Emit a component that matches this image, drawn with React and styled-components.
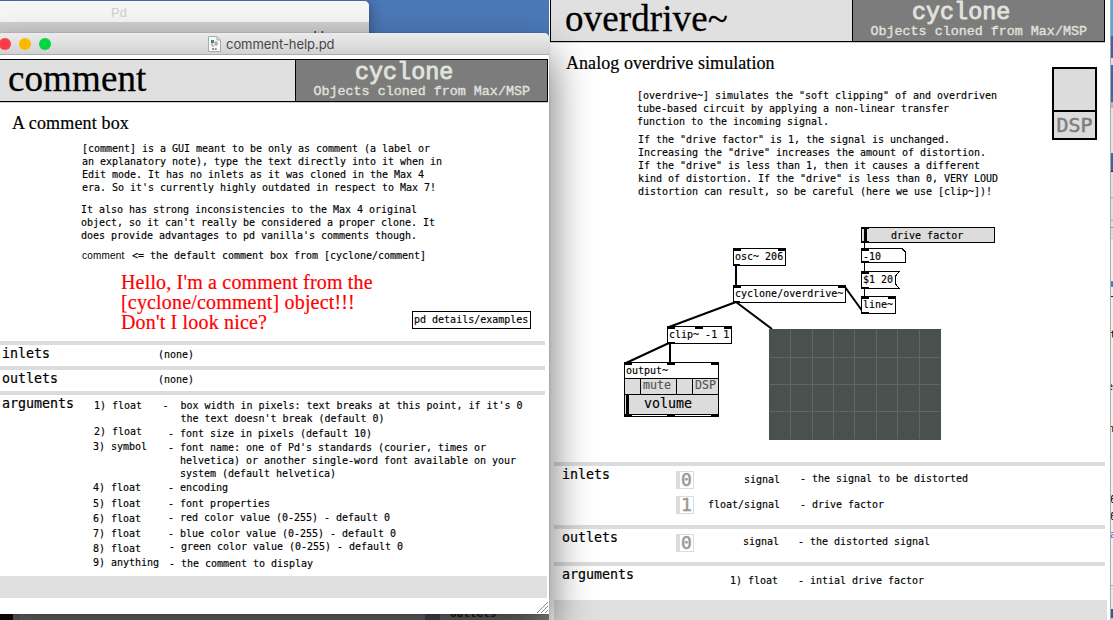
import React from "react";
import styled, { createGlobalStyle } from "styled-components";

const mono = `"DejaVu Sans Mono", "Liberation Mono", monospace`;
const serif = `"Liberation Serif", "Times New Roman", serif`;
const sans = `"Liberation Sans", Arial, sans-serif`;

const GlobalStyle = createGlobalStyle`
  *, *::before, *::after { box-sizing: border-box; }
  body { margin: 0; overflow: hidden; }
`;

const Desktop = styled.div`
  position: relative;
  width: 1113px;
  height: 620px;
  overflow: hidden;
  background: #4b78b8;
  font: 10px/13px ${mono};
  color: #000;
`;

const Frame = styled.div`
  position: absolute;
  left: ${(p) => p.$x}px;
  top: ${(p) => p.$y}px;
  width: ${(p) => p.$w}px;
  height: ${(p) => p.$h}px;
  display: flex;
  flex-direction: column;
  overflow: hidden;
  background: ${(p) => p.$bg || "#fff"};
  border-radius: ${(p) => p.$r || "0"};
  box-shadow: ${(p) => p.$shadow || "none"};
`;

const ConsoleBar = styled.div`
  height: 21px;
  padding: 4px 0 0 118px;
  background: #f6f6f6;
  color: #cfcfcf;
  font: 13px/16px ${sans};
`;
const ConsoleBody = styled.div`
  flex: 1;
  padding: 8px 0 0 203px;
  background: linear-gradient(#d0d0d0, #bdbdbd);
  font-size: 12px;
  line-height: 12px;
  white-space: pre;
`;

const TitleBar = styled.div`
  flex: none;
  height: 22px;
  display: flex;
  align-items: center;
  padding-left: 6px;
  background: linear-gradient(#ececec, #d2d2d2);
  border-bottom: 1px solid #acacac;
`;
const Light = styled.i`
  width: 12px;
  height: 12px;
  margin-right: 8px;
  border-radius: 50%;
  background: ${(p) => p.$c};
`;
const Title = styled.span`
  margin-left: 5px;
  font: 13px/16px Inter, ${sans};
  letter-spacing: -0.05px;
  color: #474747;
`;
const DocIcon = styled.svg`
  width: 13px;
  height: 16px;
  margin-left: 149px;
`;

const Banner = styled.header`
  flex: none;
  display: flex;
  width: 555px;
  height: 43px;
  margin: ${(p) => p.$m || "0"};
  border: 1px solid #000;
  background: #e0e0e0;
  box-shadow: 0 1px 0 #ccc;
`;
const Name = styled.h1`
  width: 301px;
  margin: 0;
  padding-left: 14px;
  font: 37px/38px ${serif};
  letter-spacing: 0.1px;
  -webkit-text-stroke: 0.3px #000;
`;
const Brand = styled.div`
  flex: 1;
  border-left: 1px solid #000;
  background: #7c7c7c;
  color: #e0e4dc;
  font-family: "Liberation Mono", monospace;
  white-space: pre;
`;
const BrandName = styled.div`
  padding: 1px 0 0 59px;
  font-size: 23.4px;
  line-height: 24px;
  -webkit-text-stroke: 0.9px #e0e4dc;
`;
const BrandTag = styled.div`
  padding-left: 17.5px;
  font-size: 13.37px;
  line-height: 14px;
  -webkit-text-stroke: 0.35px #e0e4dc;
`;

const Subtitle = styled.h2`
  margin: ${(p) => p.$m};
  font: 18px/20px ${serif};
  letter-spacing: ${(p) => p.$ls || "0"};
  -webkit-text-stroke: 0.2px #000;
`;
const Text = styled.div`
  margin: ${(p) => p.$m || "0"};
  white-space: pre;
  letter-spacing: -0.02px;
  -webkit-text-stroke: 0.15px currentColor;
`;
const Row = styled.div`
  display: flex;
  margin: ${(p) => p.$m || "0"};
`;
const Intro = styled.div`
  width: 449px;
`;
const Plain = styled.span`
  width: 50px;
  font: 10px/14px ${sans};
  letter-spacing: 0.2px;
`;
const Shout = styled.div`
  width: 291px;
  color: #f00;
  font: 20px/20px ${serif};
  letter-spacing: 0.17px;
  white-space: pre;
  -webkit-text-stroke: 0.2px #f00;
`;
const ObjectLink = styled.div`
  width: 119px;
  height: 18px;
  margin-top: 39px;
  padding: 1px 0 0 1px;
  border: 1px solid #000;
  white-space: nowrap;
  -webkit-text-stroke: 0.15px #000;
`;

const Section = styled.section`
  flex: none;
  display: flex;
  height: ${(p) => p.$h}px;
  width: ${(p) => p.$w}px;
  margin-top: ${(p) => p.$mt || 0}px;
  margin-left: ${(p) => p.$ml || 0}px;
  border-top: 4px solid #dcdcdc;
`;
const Label = styled.div`
  width: ${(p) => p.$w}px;
  padding-left: ${(p) => p.$pl || 8}px;
  font-size: 13.3px;
  line-height: 16px;
  margin-top: 1px;
  -webkit-text-stroke: 0.2px #000;
`;
const Column = styled.div`
  display: flex;
  flex-direction: column;
  align-items: ${(p) => p.$align || "flex-start"};
  width: ${(p) => p.$w}px;
`;
const Footer = styled.div`
  flex: none;
  width: ${(p) => p.$w}px;
  height: 22px;
  margin-left: ${(p) => p.$ml || 0}px;
  background: #e0e0e0;
`;
const Digit = styled.div`
  width: 18px;
  height: 18px;
  margin-top: ${(p) => p.$mt}px;
  border: 1px solid #dcdcdc;
  border-left-width: 4px;
  color: #999;
  font-size: 18px;
  line-height: 15px;
  text-align: center;
  -webkit-text-stroke: 0.5px #999;
`;

const Dsp = styled.div`
  width: 45px;
  height: 73px;
  margin: 25px 0 0 54px;
  border: 2px solid #000;
  background: #dcdcdc;
`;
const DspLamp = styled.div`
  height: 43px;
  border-bottom: 2px solid #000;
`;
const DspName = styled.div`
  color: #7d7d7d;
  font-size: 20px;
  line-height: 26px;
  text-align: center;
  -webkit-text-stroke: 0.5px #7d7d7d;
`;

const Patch = styled.div`
  position: relative;
  height: 262px;
  margin-top: 2px;
`;
const Wires = styled.svg`
  position: absolute;
  left: 0;
  top: 0;
`;
const Node = styled.div`
  position: absolute;
  left: ${(p) => p.$x - 549}px;
  top: ${(p) => p.$y - 200}px;
  width: ${(p) => p.$w}px;
  height: ${(p) => p.$h}px;
  padding: ${(p) => p.$pad || "1px 0 0 1px"};
  border: ${(p) => (p.$bare ? "1px solid transparent" : "1px solid #000")};
  background: ${(p) => p.$bg || (p.$bare ? "transparent" : "#fff")};
  white-space: nowrap;
  -webkit-text-stroke: 0.15px currentColor;
`;
const OutputBar = styled.div`
  display: grid;
  grid-template-columns: 15px 36px 16px 25px;
  height: 16px;
  border-top: 1px solid #000;
  background: #dcdcdc;
  color: #555;
  font-size: 11.6px;
  line-height: 13px;
`;
const OutputCell = styled.span`
  padding-left: 2px;
  border-left: ${(p) => (p.$first ? "0" : "1px solid #000")};
`;
const Volume = styled.div`
  height: 21px;
  padding-left: 19px;
  border: solid #000;
  border-width: 1px 0 1px 0;
  background: linear-gradient(90deg, #dcdcdc 1px, #000 1px, #000 4px, #dcdcdc 4px);
  font-size: 13.3px;
  line-height: 18px;
`;

const RightEdge = styled.div`
  position: absolute;
  left: 1110px;
  top: 0;
  width: 3px;
  height: 620px;
  overflow: hidden;
  background: linear-gradient(#41b4dc 0 36px, #3a66a8 36px 58px, #d8e0ec 58px 65px, #3a66a8 65px 102px, #b8b8b8 102px 108px, #e4e4e4 108px 153px, #3a66a8 153px 171px, #222 171px 172px, #dedede 172px 197px, #aaa 197px 198px, #dedede 198px 220px, #aaa 220px 221px, #dedede 221px 227px, #999 227px 228px, #dedede 228px 238px, #bbb 238px 239px, #f0f0f0 239px 282px, #2a88c8 282px 287px, #f0f0f0 287px 296px, #222 296px 297px, #f0f0f0 297px 585px, #aaa 585px 586px, #e8e8e8 586px 609px, #345890 609px 618px, #ccc 618px);
  border-left: 1px solid #aaa;
`;
const EdgeMark = styled.div`
  margin: ${(p) => p.$m};
  color: ${(p) => p.$c || "#000"};
`;
const Under = styled.div`
  position: absolute;
  left: 0;
  top: 614px;
  width: 549px;
  height: 6px;
  overflow: hidden;
  background: linear-gradient(90deg, #180808 13px, #777b86 13px 20px, #8c8c8c 20px 425px, #5d6470 425px 440px, #8c8c8c 440px);
  padding-left: 450px;
  font: bold 11px/12px ${mono};
  color: #222;
`;
const UnderText = styled.div`
  margin-top: -6px;
`;
const Grip = styled.svg`
  position: absolute;
  right: 1px;
  bottom: 1px;
`;

const names = [
  ["1) float", 3.5, 1], ["2) float", 13, 1], ["3) symbol", 2, 0], ["4) float", 28, 0],
  ["5) float", 3, 0], ["6) float", 2, 0], ["7) float", 2, 0], ["8) float", 2, 0], ["9) anything", 1.5, 0],
];
const notes = [
  ["-  box width in pixels: text breaks at this point, if it's 0\n   the text doesn't break (default 0)", 4, -0.5],
  ["- font size in pixels (default 10)", 2, 5],
  ["- font name: one of Pd's standards (courier, times or\n  helvetica) or another single-word font available on your\n  system (default helvetica)", 1, 5],
  ["- encoding", 1, 5], ["- font properties", 3, 5], ["- red color value (0-255) - default 0", 1, 5],
  ["- blue color value (0-255) - default 0", 3, 5], ["- green color value (0-255) - default 0", 0, 6], ["- the comment to display", 4, 6],
];

const Header = ({ name, m }) => (
  <Banner $m={m}>
    <Name>{name}</Name>
    <Brand>
      <BrandName>cyclone</BrandName>
      <BrandTag>Objects cloned from Max/MSP</BrandTag>
    </Brand>
  </Banner>
);

const OverdriveWindow = () => (
  <Frame $x={549} $y={-1} $w={561} $h={640}>
    <Header name="overdrive~" m="0 0 0 1px" />
    <Row>
      <Intro>
        <Subtitle $m="11px 0 0 17px" $ls="0.06px">Analog overdrive simulation</Subtitle>
        <Text $m="16px 0 0 88px">{`[overdrive~] simulates the "soft clipping" of and overdriven\ntube-based circuit by applying a non-linear transfer\nfunction to the incoming signal.`}</Text>
        <Text $m="5px 0 0 89px">{`If the "drive factor" is 1, the signal is unchanged.\nIncreasing the "drive" increases the amount of distortion.\nIf the "drive" is less than 1, then it causes a different\nkind of distortion. If the "drive" is less than 0, VERY LOUD\ndistortion can result, so be careful (here we use [clip~])!`}</Text>
      </Intro>
      <Dsp><DspLamp /><DspName>DSP</DspName></Dsp>
    </Row>
    <Patch>
      <Node $x={733} $y={248} $w={53} $h={18}>osc~ 206</Node>
      <Node $x={733} $y={285} $w={113} $h={18}>cyclone/overdrive~</Node>
      <Node $x={667} $y={326} $w={65} $h={18}>clip~ -1 1</Node>
      <Node $x={624} $y={362} $w={95} $h={55} $pad="0">
        <Text $m="1px 0 1px 1px">output~</Text>
        <OutputBar><OutputCell $first /><OutputCell>mute</OutputCell><OutputCell /><OutputCell>DSP</OutputCell></OutputBar>
        <Volume>volume</Volume>
      </Node>
      <Node $x={861} $y={227} $w={134} $h={16} $bg="#dcdcdc" $pad="1px 0 0 29px">drive factor</Node>
      <Wires width="561" height="262" viewBox="549 200 561 262">
        <g fill="#fff" stroke="#000" shapeRendering="crispEdges">
          <path d="M861.5 248.5H902L905.5 252V262.5H861.5Z" />
          <path d="M861.5 271.5H899.5L895.5 276V284L899.5 288.5H861.5Z" />
        </g>
        <g stroke="#000" strokeWidth="2">
          <path d="M736 265V285M736 302L669 327M736 302L772 329M669 343L626 363M670 343V363M845 287L863 312" />
          <path d="M864.5 242V248M864.5 262V271M864.5 288V297" strokeWidth="1" />
        </g>
        <rect x="769" y="329" width="172" height="111" fill="#4a504e" />
        <path d="M790.5 330V439M812.5 330V439M833.5 330V439M854.5 330V439M876.5 330V439M897.5 330V439M919.5 330V439M770 357.5H940M770 384.5H940M770 411.5H940" stroke="#616568" />
        <rect x="864" y="228" width="3" height="14" />
        <path d="M733 248h8v3h-8zM778 248h8v3h-8zM733 264h7v2h-7zM733 285h8v3h-8zM838 285h8v3h-8zM733 301h7v2h-7zM667 326h8v3h-8zM695 326h8v3h-8zM724 326h8v3h-8zM667 342h8v2h-8zM624 362h8v3h-8zM667 362h8v3h-8zM711 362h8v3h-8zM624 415h8v2h-8zM667 415h8v2h-8zM711 415h8v2h-8zM861 227h8v2h-8zM861 241h8v2h-8zM861 248h8v3h-8zM861 261h8v2h-8zM861 271h8v3h-8zM861 287h8v2h-8z" />
      </Wires>
      <Node $bare $x={861} $y={249} $w={40} $h={14} $pad="0 0 0 1px">-10</Node>
      <Node $bare $x={861} $y={271} $w={40} $h={18}>$1 20</Node>
      <Node $x={861} $y={296} $w={35} $h={18}>line~</Node>
      <Wires width="561" height="262" viewBox="549 200 561 262">
        <path d="M861 296h8v3h-8zM888 296h8v3h-8zM861 312h8v2h-8z" />
      </Wires>
    </Patch>
    <Section $h={63} $w={551} $ml={5}>
      <Label $w={122}>inlets</Label>
      <Column $w={18}><Digit $mt={5}>0</Digit><Digit $mt={7}>1</Digit></Column>
      <Column $w={86} $align="flex-end"><Text $m="7px 0 0">signal</Text><Text $m="12px 0 0">float/signal</Text></Column>
      <Column $w={250}><Text $m="6px 0 0 20px">- the signal to be distorted</Text><Text $m="13px 0 0 20px">- drive factor</Text></Column>
    </Section>
    <Section $h={37} $w={551} $ml={5}>
      <Label $w={122}>outlets</Label>
      <Column $w={18}><Digit $mt={5}>0</Digit></Column>
      <Column $w={85} $align="flex-end"><Text $m="6px 0 0">signal</Text></Column>
      <Column $w={250}><Text $m="6px 0 0 19px">- the distorted signal</Text></Column>
    </Section>
    <Section $h={38} $w={551} $ml={5}>
      <Label $w={122}>arguments</Label>
      <Column $w={102} $align="flex-end"><Text $m="8px 0 0">1) float</Text></Column>
      <Column $w={250}><Text $m="8px 0 0 20px">- intial drive factor</Text></Column>
    </Section>
    <Footer $w={553} $ml={5} />
  </Frame>
);

const CommentWindow = () => (
  <Frame $x={-7} $y={33} $w={556} $h={581} $r="5px 5px 0 0" $shadow="0 0 1px rgba(0,0,0,.6), 0 22px 44px rgba(0,0,0,.6)">
    <TitleBar>
      <Light $c="#fc3d48" /><Light $c="#fdb900" /><Light $c="#00d63f" />
      <DocIcon viewBox="0 0 13 16">
        <path d="M.5.5h8.5l3.5 3.5v11.5H.5z" fill="#fafafa" stroke="#aaa" />
        <path d="M9 .5V4h3.5" fill="#ddd" stroke="#aaa" />
        <path d="M3 4h3v3H3z" fill="#2a9a4a" />
        <path d="M4 7v3h2M7 6h2v3H7z" fill="none" stroke="#888" />
        <path d="M4 13h5" stroke="#777" strokeWidth="1.5" strokeDasharray="2 .7" />
      </DocIcon>
      <Title>comment-help.pd</Title>
    </TitleBar>
    <Header name="comment" m="4px 0 0" />
    <Subtitle $m="11px 0 0 19px" $ls="0.15px">A comment box</Subtitle>
    <Text $m="9px 0 0 89px">{`[comment] is a GUI meant to be only as comment (a label or\nan explanatory note), type the text directly into it when in\nEdit mode. It has no inlets as it was cloned in the Max 4\nera. So it's currently highly outdated in respect to Max 7!`}</Text>
    <Text $m="9px 0 0 88px">{`It also has strong inconsistencies to the Max 4 original\nobject, so it can't really be considered a proper clone. It\ndoes provide advantages to pd vanilla's comments though.`}</Text>
    <Row $m="7px 0 0 89px"><Plain>comment</Plain><Text>{"<= the default comment box from [cyclone/comment]"}</Text></Row>
    <Row $m="9px 0 0 128px">
      <Shout>{"Hello, I'm a comment from the\n[cyclone/comment] object!!!\nDon't I look nice?"}</Shout>
      <ObjectLink>pd details/examples</ObjectLink>
    </Row>
    <Section $h={25} $w={552} $mt={9}><Label $w={165} $pl={9}>inlets</Label><Text $m="3px 0 0">(none)</Text></Section>
    <Section $h={25} $w={552}><Label $w={165} $pl={9}>outlets</Label><Text $m="3px 0 0">(none)</Text></Section>
    <Section $h={185} $w={552}>
      <Label $w={100} $pl={9}>arguments</Label>
      <Column $w={70}>{names.map(([t, mt, ml]) => <Text key={t} $m={`${mt}px 0 0 ${ml}px`}>{t}</Text>)}</Column>
      <Column $w={370}>{notes.map(([t, mt, ml]) => <Text key={t} $m={`${mt}px 0 0 ${ml}px`}>{t}</Text>)}</Column>
    </Section>
    <Footer $w={554} />
    <Grip width="12" height="12" viewBox="0 0 12 12"><path d="M1 12L12 1M5 12L12 5M9 12L12 9" stroke="#888" /></Grip>
  </Frame>
);

export default function App() {
  return (
    <Desktop>
      <GlobalStyle />
      <Frame $x={-7} $y={1} $w={376} $h={60} $r="5px" $shadow="0 2px 14px rgba(0,0,0,.4)">
        <ConsoleBar>Pd</ConsoleBar>
        <ConsoleBody>{" .    .    .    ''"}</ConsoleBody>
      </Frame>
      <RightEdge>
        <EdgeMark $m="277px 0 0 -1px" $c="#2a88c8">m</EdgeMark>
        <EdgeMark $m="38px 0 0 -1px">t</EdgeMark>
        <EdgeMark $m="39px 0 0 -4px">e</EdgeMark>
        <EdgeMark $m="29px 0 0 -3px">n</EdgeMark>
        <EdgeMark $m="58px 0 0 -1px">6</EdgeMark>
        <EdgeMark $m="4px 0 0 -1px">6</EdgeMark>
        <EdgeMark $m="5px 0 0 -1px" $c="#2a66d8">a</EdgeMark>
      </RightEdge>
      <OverdriveWindow />
      <Under><UnderText>outlets</UnderText></Under>
      <CommentWindow />
    </Desktop>
  );
}
